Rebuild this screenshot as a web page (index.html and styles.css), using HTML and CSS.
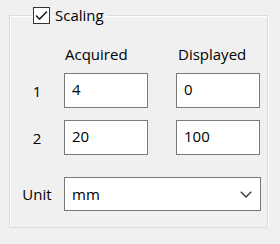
FILE: index.html
```html
<!DOCTYPE html>
<html lang="en">
<head>
    <meta charset="UTF-8">
    <title>Scaling</title>
    <link rel="stylesheet" href="styles.css">
</head>
<body>
    <fieldset class="group">
        <legend class="group-title">
            <span class="check">
                <svg width="13" height="11" viewBox="0 0 13 11"><path d="M1 5.5 L4.5 9 L12 1.5" fill="none" stroke="#222" stroke-width="1.6"/></svg>
            </span>
            <span>Scaling</span>
        </legend>
        <div class="row head">
            <span class="row-label"></span>
            <span class="col-title">Acquired</span>
            <span class="col-title">Displayed</span>
        </div>
        <div class="row">
            <span class="row-label">1</span>
            <div class="field">4</div>
            <div class="field">0</div>
        </div>
        <div class="row">
            <span class="row-label">2</span>
            <div class="field">20</div>
            <div class="field">100</div>
        </div>
        <div class="row unit-row">
            <span class="row-label">Unit</span>
            <div class="select">
                <span>mm</span>
                <svg width="12" height="7" viewBox="0 0 12 7"><path d="M0.8 0.8 L6 6 L11.2 0.8" fill="none" stroke="#333" stroke-width="1.3"/></svg>
            </div>
        </div>
    </fieldset>
</body>
</html>
```

FILE: styles.css
```css
body {
    margin: 0;
    padding: 5px 0 0 9px;
    background: #f0f0f0;
    color: #000;
    font-family: "Open Sans", "Noto Sans", Arial, sans-serif;
    font-size: 15px;
}
.group {
    width: 259px;
    box-sizing: border-box;
    margin: 0;
    padding: 19px 0 16px 0;
    border: 1px solid #dcdcdc;
    box-shadow: inset 1px 1px 0 #fff, 1px 1px 0 #fff;
}
.group-title {
    display: flex;
    align-items: center;
    gap: 5px;
    margin-left: 22px;
    padding: 0 4px 0 1px;
    height: 20px;
    line-height: 20px;
}
.check {
    width: 17px;
    height: 17px;
    box-sizing: border-box;
    border: 1px solid #333;
    background: #fff;
    display: flex;
    align-items: center;
    justify-content: center;
}
.row {
    display: flex;
    align-items: center;
    gap: 28px;
    margin-bottom: 12px;
}
.row.head {
    margin-bottom: 9px;
    line-height: 20px;
}
.row.unit-row {
    margin-top: 22px;
    margin-bottom: 0;
}
.row-label {
    width: 54px;
    margin-right: -28px;
    text-align: center;
}
.col-title {
    width: 84px;
    padding-left: 1px;
}
.field {
    width: 84px;
    height: 35px;
    box-sizing: border-box;
    border: 1px solid #7a7a7a;
    background: #fff;
    padding: 4px 7px;
    line-height: 22px;
}
.select {
    width: 197px;
    height: 34px;
    box-sizing: border-box;
    border: 1px solid #7a7a7a;
    background: #fff;
    padding: 0 8px 0 7px;
    display: flex;
    align-items: center;
    justify-content: space-between;
}
```
